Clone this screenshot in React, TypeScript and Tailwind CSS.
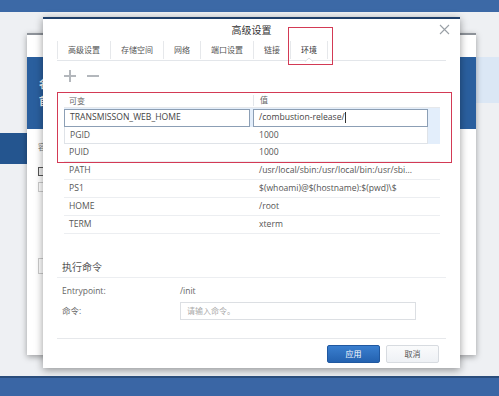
const font = { fontFamily: '"Open Sans", "Noto Sans CJK SC", sans-serif' };

const tabs = ["高级设置", "存储空间", "网络", "端口设置", "链接", "环境"];

const envRows = [
  { key: "PATH", value: "/usr/local/sbin:/usr/local/bin:/usr/sbi..." },
  { key: "PS1", value: "$(whoami)@$(hostname):$(pwd)\\$" },
  { key: "HOME", value: "/root" },
  { key: "TERM", value: "xterm" },
];

function BehindWindow() {
  return (
    <div className="absolute left-[27px] top-[33px] w-[449px] h-[322px] bg-white border-t-2 border-[#8d9299] shadow-[0_2px_6px_rgba(0,0,0,0.35)]">
      <div className="mt-[22px] h-[72px] bg-[#2a5f9e] flex flex-col gap-[2px] pl-[12px] pt-[20px] text-white text-[10px] font-bold">
        <span>名</span>
        <span>首</span>
      </div>
      <div className="pl-[11px] pt-[12px] flex flex-col items-start gap-[14px] text-[#777] text-[8px]">
        <span>容</span>
        <div className="w-[9px] h-[9px] border border-[#555] bg-[#eee]" />
        <div className="w-[12px] h-[10px] border border-[#ccc] -mt-[8px]" />
        <div className="w-[16px] h-[16px] border border-[#ccc] mt-[52px]" />
      </div>
    </div>
  );
}

function Dialog() {
  return (
    <div className="absolute left-[43px] top-[17px] w-[417px] h-[351px] bg-white border-t-2 border-[#1f3f6a] shadow-[0_2px_8px_rgba(0,0,0,0.4)] flex flex-col">
      {/* title */}
      <div className="relative h-[21px] flex items-center justify-center text-[10px] text-[#333]">
        <span className="mt-[2px]">高级设置</span>
        <svg className="absolute right-[10px] top-[5px]" width="11" height="11" viewBox="0 0 11 11">
          <path d="M1 1L10 10M10 1L1 10" stroke="#9aa0a6" strokeWidth="1.1" />
        </svg>
      </div>
      {/* tabs */}
      <div className="mx-[14px] h-[21px] border-b border-[#e3e6ea] flex items-stretch text-[8px] text-[#555]">
        {tabs.map((t, i) => (
          <div
            key={t}
            className={`relative px-[10px] flex items-center border-r border-[#e6e8eb] ${i === 0 ? "border-l" : ""} ${i === 5 ? "text-[#333]" : ""}`}
            style={{ height: 18, marginTop: 1 }}
          >
            {t}
            {i === 5 && (
              <svg className="absolute left-1/2 -translate-x-1/2 -bottom-[3px]" width="9" height="5" viewBox="0 0 9 5">
                <path d="M0 5L4.5 1L9 5" fill="white" stroke="#dde0e4" strokeWidth="1" />
              </svg>
            )}
          </div>
        ))}
      </div>
      {/* add / remove */}
      <div className="mx-[21px] mt-[8px] flex items-center gap-[11px] h-[13px]">
        <svg width="12" height="12" viewBox="0 0 12 12">
          <path d="M6 0V12M0 6H12" stroke="#b3b7bc" strokeWidth="2" />
        </svg>
        <svg width="12" height="12" viewBox="0 0 12 12">
          <path d="M0 6H12" stroke="#b3b7bc" strokeWidth="2" />
        </svg>
      </div>
      {/* table */}
      <div className="relative ml-[21px] w-[376px] mt-[11px] text-[8.6px] text-[#555]">
        <div className="h-[15px] flex items-center border-b border-[#e6e8eb] text-[8px] text-[#666]">
          <div className="w-[189px] pl-[5px] mt-[1px]">可变</div>
          <div className="h-[11px] border-l border-[#e3e6ea] pl-[6px] flex items-center">值</div>
        </div>
        <div className="h-[19px] bg-[#e3eefb] flex items-center">
          <div className="w-[186px] h-[18px] border border-[#8c9fb5] bg-white pl-[5px] flex items-center text-[#444]">TRANSMISSON_WEB_HOME</div>
          <div className="ml-[3px] w-[175px] h-[18px] border border-[#8c9fb5] bg-white pl-[5px] flex items-center text-[#444]">
            /combustion-release/<span className="inline-block w-px h-[11px] bg-[#333]" />
          </div>
        </div>
        <div className="h-[17px] bg-[#e3eefb] flex">
          <div className="w-[364px] h-[17px] bg-white border border-[#dfe3e8] border-t-0 flex items-center">
            <div className="w-[189px] pl-[5px]">PGID</div>
            <div className="pl-[5px]">1000</div>
          </div>
        </div>
        <div className="h-[18px] flex items-center border-b border-[#eceef1]">
          <div className="w-[189px] pl-[5px]">PUID</div>
          <div className="pl-[6px]">1000</div>
        </div>
        {envRows.map((r) => (
          <div key={r.key} className="h-[18px] flex items-center border-b border-[#eceef1]">
            <div className="w-[189px] pl-[5px]">{r.key}</div>
            <div className="pl-[6px]">{r.value}</div>
          </div>
        ))}
        {/* annotation box */}
        <div className="absolute -left-[7px] -top-[1px] w-[395px] h-[71px] border border-[#d33a55]" />
      </div>
      {/* exec section */}
      <div className="mx-[14px] mt-[26px] pb-[2px] border-b border-[#eceef1] pl-[5px] text-[10px] text-[#555]">执行命令</div>
      <div className="ml-[19px] mt-[7px] flex items-center text-[8.5px] text-[#666] h-[12px]">
        <div className="w-[118px]">Entrypoint:</div>
        <div>/init</div>
      </div>
      <div className="ml-[19px] mt-[5px] flex items-center text-[8.5px] text-[#666]">
        <div className="w-[118px]">命令:</div>
        <div className="w-[236px] h-[18px] border border-[#dcdfe3] pl-[6px] flex items-center text-[#aaa] text-[8px]">请输入命令。</div>
      </div>
      {/* footer */}
      <div className="mx-[14px] mt-[18px] border-t border-[#e6e8eb] flex justify-end gap-[6px] pt-[6px] pr-[7px]">
        <button className="w-[53px] h-[18px] rounded-[2px] bg-gradient-to-b from-[#3a7fcf] to-[#2462b0] border border-[#2058a0] text-white text-[8px]">应用</button>
        <button className="w-[53px] h-[18px] rounded-[2px] bg-gradient-to-b from-[#fafbfc] to-[#eef1f5] border border-[#d7dbe0] text-[#555] text-[8px]">取消</button>
      </div>
    </div>
  );
}

export default function App() {
  return (
    <div className="relative w-[499px] h-[396px] overflow-hidden bg-[#eef0f3]" style={font}>
      <div className="absolute left-0 top-0 w-full h-[12px] bg-[#3c69a6]" />
      <div className="absolute left-0 top-[133px] w-[27px] h-[31px] bg-[#24558f]" />
      <div className="absolute left-[476px] top-[57px] w-[23px] h-[46px] bg-[#dbe7f5]" />
      <BehindWindow />
      <Dialog />
      {/* tab annotation */}
      <div className="absolute left-[288px] top-[27px] w-[45px] h-[38px] border border-[#d33a55]" />
      <div className="absolute left-0 bottom-0 w-full h-[20px] bg-[#3a66a5] border-t-2 border-[#2a4d7c]" />
    </div>
  );
}
